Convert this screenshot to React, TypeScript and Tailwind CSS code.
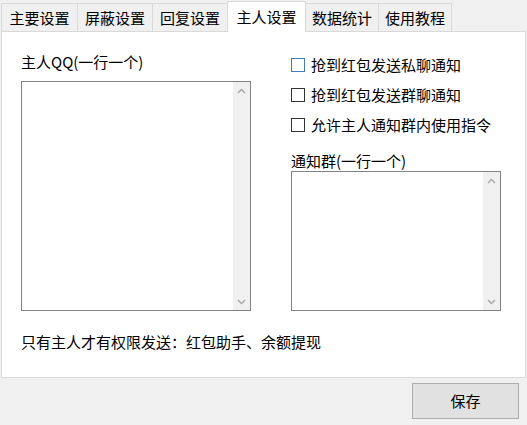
import React, { useState } from 'react';

const tabs = [
  { name: '主要设置', width: 'w-[77px]' },
  { name: '屏蔽设置', width: 'w-[76px]' },
  { name: '回复设置', width: 'w-[76px]' },
  { name: '主人设置', width: 'w-[79px]' },
  { name: '数据统计', width: 'w-[74px]' },
  { name: '使用教程', width: 'w-[74px]' }
];

const Chevron: React.FC<{ down?: boolean }> = ({ down }) => (
  <svg width="9" height="6" viewBox="0 0 9 6" fill="none">
    <path
      d={down ? 'M1 1L4.5 4.5L8 1' : 'M1 5L4.5 1.5L8 5'}
      stroke="#a6a6a6"
      strokeWidth="1.4"
    />
  </svg>
);

const ListBox: React.FC<{ className: string }> = ({ className }) => (
  <div className={`flex border border-[#828282] bg-white ${className}`}>
    <textarea className="flex-1 resize-none outline-none bg-white" />
    <div className="w-[17px] bg-[#f0f0f0] flex flex-col justify-between">
      <div className="h-[17px] flex items-center justify-center">
        <Chevron />
      </div>
      <div className="h-[17px] flex items-center justify-center">
        <Chevron down />
      </div>
    </div>
  </div>
);

const CheckRow: React.FC<{ label: string; focused?: boolean }> = ({ label, focused }) => {
  const [checked, setChecked] = useState(false);
  return (
    <label className="h-[20px] flex items-center cursor-default">
      <span
        onClick={() => setChecked(!checked)}
        className={`shrink-0 w-[14px] h-[14px] border bg-white flex items-center justify-center ${
          focused ? 'border-[#3f7cb8]' : 'border-[#333333]'
        }`}
      >
        {checked && <span className="w-[8px] h-[8px] bg-[#333333]" />}
      </span>
      <span className="ml-[6px]">{label}</span>
    </label>
  );
};

const App: React.FC = () => {
  const [active, setActive] = useState(3);

  return (
    <div
      className="w-[527px] h-[425px] bg-[#f0f0f0] flex flex-col text-[15px] leading-[20px] text-black overflow-hidden"
      style={{ fontFamily: '"Noto Sans CJK SC", "Noto Sans", sans-serif' }}
    >
      <div className="flex items-end h-[31px] pl-[1px] pt-[1px]">
        {tabs.map((tab, i) => (
          <div
            key={tab.name}
            onClick={() => setActive(i)}
            className={`${tab.width} flex items-center justify-center border border-b-0 border-[#d9d9d9] ${
              i > 0 ? '-ml-px' : ''
            } ${
              active === i
                ? 'h-[31px] bg-white relative z-10 -mb-px'
                : 'h-[28px] bg-[#f0f0f0]'
            }`}
          >
            {tab.name}
          </div>
        ))}
      </div>

      <div className="mx-[1px] h-[347px] bg-white border border-[#d9d9d9] pt-[20px] px-[19px]">
        <div className="flex">
          <div className="w-[230px]">
            <div>主人QQ(一行一个)</div>
            <ListBox className="mt-[9px] h-[230px]" />
          </div>
          <div className="ml-[40px] w-[210px]">
            <div className="pt-[3px] flex flex-col gap-[10px]">
              <CheckRow label="抢到红包发送私聊通知" focused />
              <CheckRow label="抢到红包发送群聊通知" />
              <CheckRow label="允许主人通知群内使用指令" />
            </div>
            <div className="mt-[16px]">通知群(一行一个)</div>
            <ListBox className="h-[140px]" />
          </div>
        </div>
        <div className="mt-[21px]">只有主人才有权限发送：红包助手、余额提现</div>
      </div>

      <div className="flex justify-end pr-[8px] pt-[5px]">
        <button className="w-[107px] h-[36px] bg-[#e1e1e1] border border-[#adadad]">
          保存
        </button>
      </div>
    </div>
  );
};

export default App;
